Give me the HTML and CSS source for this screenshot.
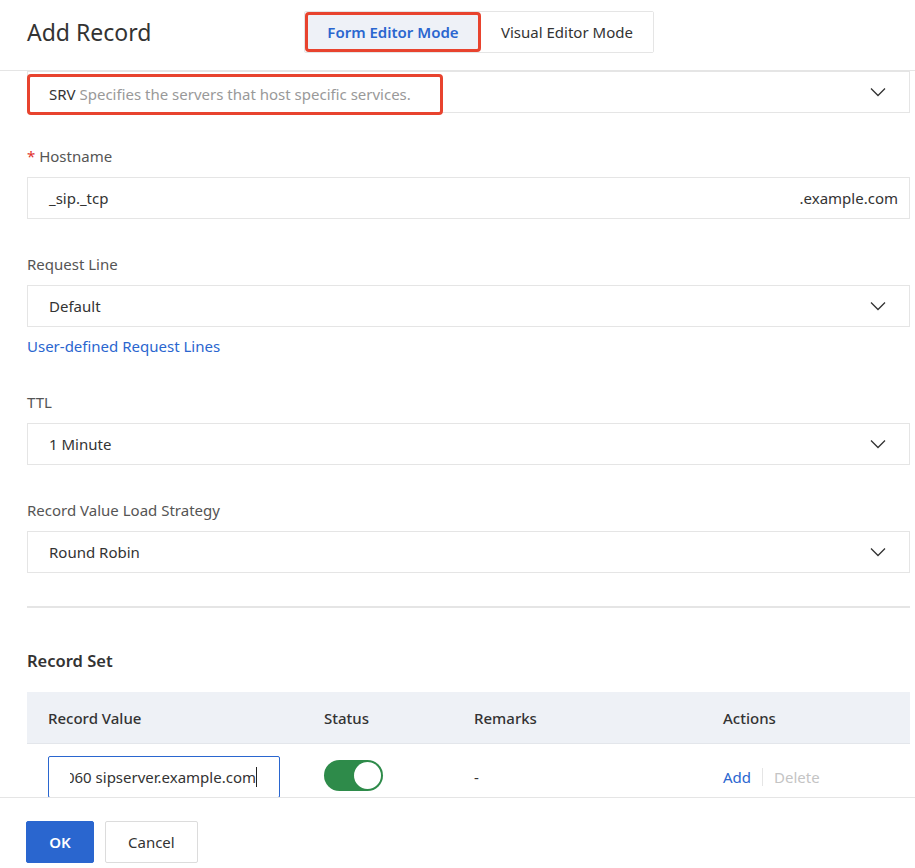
FILE: index.html
```html
<!DOCTYPE html>
<html lang="en">
<head>
    <meta charset="UTF-8">
    <meta name="viewport" content="width=device-width, initial-scale=1.0">
    <title>Add Record</title>
    <link rel="stylesheet" href="styles.css">
</head>
<body>
    <div class="panel">
        <div class="panel-header">
            <h1 class="title">Add Record</h1>
            <div class="mode-switch">
                <button type="button" class="mode-btn active marked">Form Editor Mode</button>
                <button type="button" class="mode-btn">Visual Editor Mode</button>
            </div>
        </div>

        <div class="panel-body">
            <div class="select">
                <span class="marked-text"><span class="value">SRV</span> <span class="hint">Specifies the servers that host specific services.</span></span>
                <svg class="chevron" width="16" height="10" viewBox="0 0 16 10"><polyline points="1,1.5 8,8.5 15,1.5" fill="none" stroke="#333" stroke-width="1.3"/></svg>
            </div>

            <div class="field first">
                <label class="field-label"><span class="required">*</span> Hostname</label>
                <div class="input">
                    <span class="value">_sip._tcp</span>
                    <span class="value">.example.com</span>
                </div>
            </div>

            <div class="field">
                <label class="field-label">Request Line</label>
                <div class="select">
                    <span class="value">Default</span>
                    <svg class="chevron" width="16" height="10" viewBox="0 0 16 10"><polyline points="1,1.5 8,8.5 15,1.5" fill="none" stroke="#333" stroke-width="1.3"/></svg>
                </div>
                <a class="link" href="#">User-defined Request Lines</a>
            </div>

            <div class="field">
                <label class="field-label">TTL</label>
                <div class="select">
                    <span class="value">1 Minute</span>
                    <svg class="chevron" width="16" height="10" viewBox="0 0 16 10"><polyline points="1,1.5 8,8.5 15,1.5" fill="none" stroke="#333" stroke-width="1.3"/></svg>
                </div>
            </div>

            <div class="field">
                <label class="field-label">Record Value Load Strategy</label>
                <div class="select">
                    <span class="value">Round Robin</span>
                    <svg class="chevron" width="16" height="10" viewBox="0 0 16 10"><polyline points="1,1.5 8,8.5 15,1.5" fill="none" stroke="#333" stroke-width="1.3"/></svg>
                </div>
            </div>

            <hr class="divider">

            <h2 class="section-title">Record Set</h2>
            <div class="table">
                <div class="table-row table-head">
                    <div>Record Value</div>
                    <div>Status</div>
                    <div>Remarks</div>
                    <div>Actions</div>
                </div>
                <div class="table-row">
                    <div>
                        <div class="cell-input">
                            <div class="cell-input-clip"><span>0 5 5060 sipserver.example.com</span><span class="caret"></span></div>
                        </div>
                    </div>
                    <div><span class="switch"><span class="knob"></span></span></div>
                    <div>-</div>
                    <div class="actions">
                        <a href="#" class="link">Add</a>
                        <span class="sep"></span>
                        <span class="disabled">Delete</span>
                    </div>
                </div>
            </div>
        </div>

        <div class="panel-footer">
            <button type="button" class="btn btn-primary">OK</button>
            <button type="button" class="btn">Cancel</button>
        </div>
    </div>
</body>
</html>
```

FILE: styles.css
```css
body {
    margin: 0;
    font-family: "Noto Sans", "Open Sans", Arial, sans-serif;
    color: #333;
    background-color: #fff;
}
.panel {
    display: flex;
    flex-direction: column;
    height: 868px;
}
.panel-header {
    display: flex;
    align-items: center;
    height: 71px;
    padding-left: 27px;
    border-bottom: 1px solid #e5e5e5;
    box-sizing: border-box;
    flex-shrink: 0;
}
.title {
    margin: 0 0 6px;
    font-size: 23px;
    font-weight: 400;
    color: #333;
    width: 277px;
}
.mode-switch {
    display: flex;
    height: 42px;
    margin-bottom: 6px;
    border: 1px solid #e5e5e5;
    border-radius: 2px;
    box-sizing: border-box;
}
.mode-btn {
    font-family: inherit;
    font-size: 15px;
    color: #333;
    background: #fff;
    border: none;
    padding: 0 20px;
    cursor: pointer;
}
.mode-btn.active {
    color: #2a66cf;
    background-color: #eef1f7;
    font-weight: 600;
    width: 176px;
    padding: 0;
}
.marked {
    outline: 3px solid #e8432e;
    outline-offset: -3px;
    border-radius: 4px;
}
.panel-body {
    flex: 1;
    overflow: hidden;
    padding: 0 5px 0 27px;
}
.select,
.input {
    display: flex;
    align-items: center;
    justify-content: space-between;
    height: 42px;
    padding: 0 22px 0 21px;
    border: 1px solid #e5e5e5;
    box-sizing: border-box;
    font-size: 15px;
}
.select .chevron {
    margin-right: 1px;
}
.marked-text {
    align-self: flex-start;
    margin: 2px 0 -4px -22px;
    padding: 0 29px 0 19px;
    height: 41px;
    line-height: 35px;
    border: 3px solid #e8432e;
    border-radius: 4px;
    box-sizing: border-box;
}
.hint {
    color: #999;
}
.input {
    padding-right: 11px;
}
.field {
    margin-top: 35px;
}
.field.first {
    margin-top: 33px;
}
.field-label {
    display: block;
    font-size: 15px;
    line-height: 20px;
    color: #555;
    margin-bottom: 11px;
}
.required {
    color: #e0302a;
}
.link {
    display: inline-block;
    color: #2a66cf;
    text-decoration: none;
    font-size: 15px;
    line-height: 20px;
    margin-top: 9px;
}
.divider {
    border: none;
    border-top: 2px solid #e5e5e5;
    margin: 33px 0 0;
}
.section-title {
    margin: 43px 0 0;
    font-size: 16.5px;
    font-weight: 600;
    line-height: 20px;
    color: #333;
}
.table {
    margin-top: 21px;
}
.table-row {
    display: grid;
    grid-template-columns: 276px 150px 249px 1fr;
    align-items: center;
    padding-left: 21px;
    font-size: 15px;
}
.table-head {
    height: 51px;
    background-color: #eef1f6;
    border-bottom: 1px solid #e3e6eb;
    font-weight: 500;
}
.table-row:not(.table-head) {
    height: 65px;
}
.cell-input {
    width: 232px;
    height: 42px;
    box-sizing: border-box;
    border: 1px solid #2a66cf;
    border-radius: 2px;
    padding: 0 22px 0 21px;
    display: flex;
    align-items: center;
}
.cell-input-clip {
    display: flex;
    justify-content: flex-end;
    align-items: center;
    overflow: hidden;
    white-space: nowrap;
    width: 100%;
    font-size: 15px;
}
.caret {
    flex-shrink: 0;
    width: 1px;
    height: 20px;
    background: #222;
}
.switch {
    display: inline-flex;
    justify-content: flex-end;
    align-items: center;
    width: 59px;
    height: 31px;
    padding: 2px;
    box-sizing: border-box;
    background-color: #2e8b4a;
    border-radius: 16px;
}
.knob {
    width: 27px;
    height: 27px;
    border-radius: 50%;
    background: #fff;
}
.actions {
    display: flex;
    align-items: center;
    font-size: 15px;
}
.actions .link {
    margin-top: 0;
}
.sep {
    width: 1px;
    height: 18px;
    background: #e5e5e5;
    margin: 0 11px;
}
.disabled {
    color: #c4c4c4;
}
.panel-footer {
    flex-shrink: 0;
    display: flex;
    gap: 11px;
    height: 71px;
    padding: 23px 0 0 26px;
    box-sizing: border-box;
    border-top: 1px solid #e5e5e5;
}
.btn {
    font-family: inherit;
    font-size: 15px;
    height: 42px;
    padding: 0 22px;
    background: #fff;
    color: #333;
    border: 1px solid #dcdcdc;
    border-radius: 2px;
    cursor: pointer;
}
.btn-primary {
    background-color: #2a66cf;
    border-color: #2a66cf;
    color: #fff;
    font-weight: 600;
    width: 68px;
    padding: 0;
}
```
